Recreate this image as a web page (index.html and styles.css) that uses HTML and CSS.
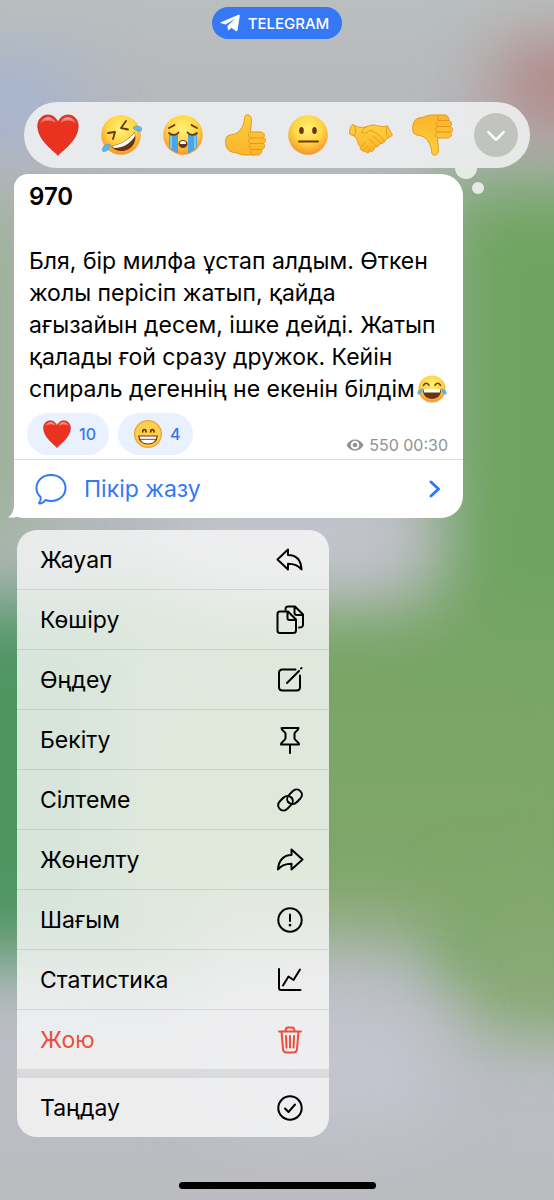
FILE: index.html
```html
<!DOCTYPE html>
<html lang="kk">

<head>
    <meta charset="UTF-8">
    <meta name="viewport" content="width=device-width, initial-scale=1.0">
    <title>Telegram</title>
    <link rel="stylesheet" href="styles.css">
</head>

<body>
    <!-- Shared emoji -->
    <svg class="sprite" aria-hidden="true">
        <defs>
            <radialGradient id="face" cx="50%" cy="35%" r="65%">
                <stop offset="0" stop-color="#fff27a" />
                <stop offset="0.55" stop-color="#ffd644" />
                <stop offset="1" stop-color="#f4942a" />
            </radialGradient>
            <linearGradient id="hand" x1="0" y1="0" x2="0" y2="1">
                <stop offset="0" stop-color="#ffcf3f" />
                <stop offset="1" stop-color="#fbb52a" />
            </linearGradient>
            <linearGradient id="shine" x1="0" y1="0" x2="0" y2="1">
                <stop offset="0" stop-color="#fff" stop-opacity="0.6" />
                <stop offset="1" stop-color="#fff" stop-opacity="0" />
            </linearGradient>
        </defs>
        <symbol id="heart" viewBox="0 0 42 42">
            <path d="M21 41.500C19 38 1 27 .8 12.500C.7 5.500 5 1 11 1C15.500 1 19.500 4 21 8.500C22.500 4 26.500 1 31 1C37 1 41.300 5.500 41.200 12.500C41 27 23 38 21 41.500Z" fill="#e9321f" stroke="#c92a25" stroke-width=".8" />
            <path d="M3 11C4 5 9 2.500 13 3.500C17 4.500 19 8 18 9C15 6 6 5 3 11ZM39 11C38 5 33 2.500 29 3.500C25 4.500 23 8 24 9C27 6 36 5 39 11Z" fill="url(#shine)" />
        </symbol>
        <symbol id="rofl" viewBox="0 0 42 42">
            <circle cx="21" cy="21" r="19.800" fill="url(#face)" />
            <g fill="none" stroke="#6b3410" stroke-width="1.800" stroke-linecap="round" stroke-linejoin="round">
                <path d="M8 19L15 18L13 25M26 7L21 14L28 15.500" />
            </g>
            <path d="M11 32C19 31 29 26 34.500 18C38 28 31 37 22 37C17 37 13 35 11 32Z" fill="#6b3410" />
            <path d="M12 32C20 31 29 26 34.500 18.500L35 22C30 30 23 34 14 34Z" fill="#fff" />
            <path d="M33 14C35 11 41 12 42 14.500C42 18 38 18.500 33 14ZM10 30C10 34 7 38 3 37.500C1 35 4 30 10 30Z" fill="#5db8ec" stroke="#3a92d0" stroke-width=".6" />
        </symbol>
        <symbol id="sob" viewBox="0 0 42 42">
            <circle cx="21" cy="21" r="19.800" fill="url(#face)" />
            <path d="M7 20H16V39C12 38 9 35.500 7 33ZM26 20H35V33C33 35.500 30 38 26 39Z" fill="#4ba6e3" />
            <path d="M9 22V34M33 22V34" stroke="#7fc8f3" stroke-width="2" />
            <g fill="none" stroke="#6b3410" stroke-width="1.800" stroke-linecap="round">
                <path d="M7 19C10 21.500 14 21.500 16.500 18.500M25.500 18.500C28 21.500 32 21.500 35 19M7 14C9 13 11 12 12.500 11M35 14C33 13 31 12 29.500 11" />
            </g>
            <ellipse cx="21" cy="30" rx="4.500" ry="4" fill="#6b3410" />
            <path d="M18 28.500C19 26.500 23 26.500 24 28.500V30H18Z" fill="#fff" />
        </symbol>
        <symbol id="thumb" viewBox="0 0 42 42">
            <path d="M1.500 23C4 20 9 21 12 19C16 16 18.500 12 19.500 6C19.500 2 20.500 .8 22.500 .8C26.500 .8 27 6 26 11L25.500 18H35C39 18 40.500 21 38.500 23.500C41.500 24.500 41 28 38.500 29.500C40.500 31.500 39.500 35 36.500 35.500C37.500 38.500 35.500 41 32 41H20C14 41 13 38.500 7 38C1 37 -.5 28 1.500 23Z" fill="url(#hand)" stroke="#e8951f" stroke-width="1" stroke-linejoin="round" />
            <path d="M25.500 18C22.500 20 22.500 22.500 26 24H38.500M26 24C22.500 25.500 22.500 28 26 29.500H38.500M26 29.500C23 31 23.500 34 27 35.500H36.500M27 35.500C24.500 37 25.500 40 28 41" fill="none" stroke="#e8951f" stroke-width="1" stroke-linecap="round" />
        </symbol>
        <symbol id="neutral" viewBox="0 0 42 42">
            <circle cx="21" cy="21" r="19.800" fill="url(#face)" />
            <ellipse cx="14.500" cy="16.500" rx="2.300" ry="3.500" fill="#6b3410" />
            <ellipse cx="27.500" cy="16.500" rx="2.300" ry="3.500" fill="#6b3410" />
            <path d="M12 27.500H31" stroke="#6b3410" stroke-width="2" stroke-linecap="round" />
        </symbol>
        <symbol id="shake" viewBox="0 0 46 42">
            <path d="M4 10C8 13 14 14 19 12L24 10.500C29 10.500 34 13.500 40 11.500L45.500 21C43 23.500 41 23.500 39 25L37 28C36 30 34 30 32 30C32 33 29 34 27 33C27 36 25 39 22 38C21 40 18 40 17 38C14 38.500 11 36 12 33.500C10 32 9 28 8 25L5.500 22L.8 20C0 16 1.500 12 4 10Z" fill="url(#hand)" stroke="#e8951f" stroke-width="1" stroke-linejoin="round" />
            <path d="M19 12C15 14 12 16.500 14 19C17 20 20 18 22 16C28 18 34 22 37 28M25 22L33 29M21 25L28 32M13 33L17 29M16 36L20 32M20 38L23 34M40 11.500C38 16 39 20 41 24M4 10C8 13 8 19 5.500 22" fill="none" stroke="#e8951f" stroke-width="1" stroke-linecap="round" />
        </symbol>
        <symbol id="joy" viewBox="0 0 42 42">
            <circle cx="21" cy="21" r="19" fill="url(#face)" />
            <path d="M9 16C11 12 15 12 17 16M25 16C27 12 31 12 33 16" fill="none" stroke="#6b3410" stroke-width="2" stroke-linecap="round" />
            <path d="M8 21H34C34 30 28 35 21 35C14 35 8 30 8 21Z" fill="#6b3410" />
            <path d="M9 21H33L32 26H10Z" fill="#fff" />
            <path d="M8 20C8 26 4 31 1 28C-1 25 3 22 8 20ZM34 20C34 26 38 31 41 28C43 25 39 22 34 20Z" fill="#58b4ec" />
        </symbol>
        <symbol id="grin" viewBox="0 0 42 42">
            <circle cx="21" cy="21" r="20" fill="#fdd04c" stroke="#efa338" stroke-width="2" />
            <path d="M13 18C13 13 18 13 18 18M25 18C25 13 30 13 30 18" fill="none" stroke="#6b3410" stroke-width="2.500" stroke-linecap="round" />
            <path d="M7 24H35C34 32 29 36 21 36C13 36 8 32 7 24Z" fill="#fff" stroke="#6b3410" stroke-width="1.800" stroke-linejoin="round" />
            <path d="M8 29H34" stroke="#6b3410" stroke-width="1.300" />
        </symbol>
    </svg>

    <div class="wallpaper" aria-hidden="true">
        <span class="blob blob-blue"></span>
        <span class="blob blob-sage"></span>
        <span class="blob blob-green"></span>
        <span class="blob blob-emerald"></span>
        <span class="blob blob-field"></span>
        <span class="blob blob-red"></span>
        <span class="blob blob-haze"></span>
        <span class="blob blob-olive"></span>
        <span class="blob blob-fog"></span>
    </div>

    <a class="app-pill" href="#">
        <svg width="20" height="18" viewBox="0 0 20 18"><path d="M.8 8.300L18.500.8C19.300.5 20 1 19.800 1.900L17.500 16.200C17.300 17.200 16.500 17.500 15.700 16.900L11.500 13.800L9 15.900C8.500 16.300 8 16.200 7.900 15.500L7.300 12L15.500 4.500L5.800 10.500L1 9.300C.3 9.100.2 8.600.8 8.300Z" fill="#fff" /></svg>
        TELEGRAM
    </a>

    <div class="reactions">
        <button type="button" aria-label="Жүрек"><svg><use href="#heart" /></svg></button>
        <button type="button" aria-label="Күлкі"><svg><use href="#rofl" /></svg></button>
        <button type="button" aria-label="Жылау"><svg><use href="#sob" /></svg></button>
        <button type="button" aria-label="Ұнайды"><svg><use href="#thumb" /></svg></button>
        <button type="button" aria-label="Бейтарап"><svg><use href="#neutral" /></svg></button>
        <button type="button" aria-label="Қол алысу"><svg class="wide"><use href="#shake" /></svg></button>
        <button type="button" aria-label="Ұнамайды"><svg class="flipped"><use href="#thumb" /></svg></button>
        <button type="button" class="more" aria-label="Тағы">
            <svg viewBox="0 0 44 44"><path d="M14 19L22 27L30 19" fill="none" stroke="#fff" stroke-width="2.600" stroke-linecap="round" stroke-linejoin="round" /></svg>
        </button>
    </div>

    <article class="message">
        <svg class="tail" width="24" height="20" viewBox="0 0 24 20"><path d="M6 0V7C6 12 4 17 0 19.500C5 20 12 19 16 16C18 18 21 20 24 20V0Z" fill="#fff" /></svg>
        <div class="message-body">
            <h1>970</h1>
            <p>Бля, бір милфа ұстап алдым. Өткен<br>жолы перісіп жатып, қайда<br>ағызайын десем, ішке дейді. Жатып<br>қалады ғой сразу дружок. Кейін<br>спираль дегеннің не екенін білдім<svg class="inline-emoji"><use href="#joy" /></svg></p>
            <div class="message-footer">
                <button type="button" class="chip"><svg><use href="#heart" /></svg>10</button>
                <button type="button" class="chip"><svg><use href="#grin" /></svg>4</button>
                <span class="meta">
                    <svg width="18" height="14" viewBox="0 0 18 14"><path d="M.5 7C4-.5 14-.5 17.500 7C14 14.500 4 14.500.5 7Z" fill="#929296" /><circle cx="9" cy="7" r="4.300" fill="#fff" /><circle cx="9" cy="7" r="2.300" fill="#929296" /></svg>
                    550 00:30
                </span>
            </div>
        </div>
        <button type="button" class="comment">
            <svg width="32" height="32" viewBox="0 0 32 32" fill="none" stroke="currentColor" stroke-width="2" stroke-linejoin="round"><path d="M16 2C24.500 2 30.500 7.500 30.500 15S24.500 28 16 28C14 28 12 27.700 10.500 27C9 29 6.500 30.500 4.500 30.500C4 30.300 4 30 4.300 29.500C5.500 28 6 26 5.600 24C3 21.800 1.500 18.500 1.500 15C1.500 7.500 7.500 2 16 2Z" /></svg>
            <span>Пікір жазу</span>
            <svg class="chevron" width="12" height="18" viewBox="0 0 12 18" fill="none" stroke="currentColor" stroke-width="3" stroke-linecap="round" stroke-linejoin="round"><path d="M2 2L9.500 9L2 16" /></svg>
        </button>
    </article>

    <nav class="menu">
        <div class="menu-group">
            <button type="button">Жауап <svg viewBox="0 0 30 30"><path d="M2.500 14.500L13 4.500V10C21 10 26 15 26.500 24.500C23 20 19 18.700 13 18.700V24.500Z" /></svg></button>
            <button type="button">Көшіру <svg viewBox="0 0 30 30"><path d="M13 6.500H5C3.300 6.500 2.500 7.500 2.500 9V25.500C2.500 27.500 3.300 28 5 28H18C20 28 21 27.500 21 25.500V14.500ZM12.500 7V13C12.500 14.500 13.200 15 14.500 15H21M10.500 4.500C10.500 2.500 11.200 1.500 13 1.500H20L28 9.500V19.500C28 21.500 27.500 22.500 24 22.500M19.500 2V8C19.500 9.500 20.500 10 22 10H27.500" /></svg></button>
            <button type="button">Өңдеу <svg viewBox="0 0 30 30"><path d="M20.500 4.500H7.500C5 4.500 4 5.500 4 8V22C4 24.500 5 25.500 7.500 25.500H21.500C24 25.500 25 24.500 25 22V10.500M12 18L24 6M26 3.500L26.500 3" /></svg></button>
            <button type="button">Бекіту <svg viewBox="0 0 30 30"><path d="M6.500 3H23.500C23.500 5.500 20 6.500 19.500 8.500V13.500C20 15.500 24 17 24 19.500H6C6 17 10 15.500 10.500 13.500V8.500C10 6.500 6.500 5.500 6.500 3ZM15 19.500V28" /></svg></button>
            <button type="button">Сілтеме <svg viewBox="0 0 30 30"><g transform="rotate(-45 15 15)"><path d="M11.500 9.700H7C3.800 9.700 1.400 12 1.400 15S3.800 20.300 7 20.300H12C15.500 20.300 17.700 18 17.700 15.500" transform="translate(0 -1)" /><path d="M18.500 20.300H23C26.200 20.300 28.600 18 28.600 15S26.200 9.700 23 9.700H18C14.500 9.700 12.300 12 12.300 14.500" transform="translate(0 1)" /><path d="M11.500 8.700C15 8.700 17.700 11 17.700 14.500M18.500 21.300C15 21.300 12.300 19 12.300 15.500" /></g></svg></button>
            <button type="button">Жөнелту <svg viewBox="0 0 30 30"><path d="M27.500 14.500L16.500 4.500V10C9 10 3.500 15 3 24.500C6.500 20 10.500 18.700 16.500 18.700V24.500Z" /></svg></button>
            <button type="button">Шағым <svg viewBox="0 0 30 30"><circle cx="15" cy="15" r="11.700" /><path d="M15 9.500V16" /><path d="M15 20V20.300" stroke-width="2.600" /></svg></button>
            <button type="button">Статистика <svg viewBox="0 0 30 30"><path d="M4 4V23C4 24.500 4.500 25 6 25H25.500M8 20.500L13.500 11.500L18.500 15L25 4.500" /></svg></button>
            <button type="button" class="danger">Жою <svg viewBox="0 0 30 30"><path d="M4 6.500H26M6.500 6.500L8 24C8.200 26.500 9.300 27.500 11.500 27.500H18.500C20.700 27.500 21.800 26.500 22 24L23.500 6.500M10.500 6C10.500 3.500 11 2.500 13 2.500H17C19 2.500 19.500 3.500 19.500 6M11 11L11.500 22.500M15 11V22.500M19 11L18.500 22.500" /></svg></button>
        </div>
        <div class="menu-group">
            <button type="button">Таңдау <svg viewBox="0 0 30 30"><circle cx="15" cy="15" r="11.700" /><path d="M10 15.500L13.500 19L20 11.500" /></svg></button>
        </div>
    </nav>

    <div class="home-indicator"></div>
</body>

</html>
```
FILE: styles.css
```css
* {
    box-sizing: border-box;
    margin: 0;
    padding: 0;
}

body {
    font-family: Inter, 'Liberation Sans', sans-serif;
    font-size: 23px;
    color: #000;
    background-color: #babcc2;
    min-height: 100vh;
    display: flex;
    flex-direction: column;
    align-items: flex-start;
    padding: 7px 0 11px;
    position: relative;
    overflow-x: hidden;
}

button {
    font: inherit;
    color: inherit;
    background: none;
    border: none;
    cursor: pointer;
}

svg {
    display: block;
    flex-shrink: 0;
}

.sprite {
    position: absolute;
    width: 0;
    height: 0;
}

/* Blurred chat behind the menu */
.wallpaper {
    position: absolute;
    inset: 0;
    overflow: hidden;
    z-index: -1;
    background: linear-gradient(#b9bfbf, #b6b7bb 10%, #bcbec6 90%, #bbbcbf);
}

.blob {
    position: absolute;
    filter: blur(36px);
}

.blob-blue {
    left: -20%;
    top: 5%;
    width: 34%;
    height: 7%;
    background: #a5b4d2;
}

.blob-sage {
    left: -15%;
    top: 17%;
    width: 23%;
    height: 28%;
    background: #9cb198;
}

.blob-green {
    left: 79%;
    top: 15%;
    width: 40%;
    height: 67%;
    background: #6ea460;
}

.blob-field {
    left: 20%;
    top: 50%;
    width: 90%;
    height: 28%;
    background: linear-gradient(#75a564, #83a76c);
}

.blob-emerald {
    left: -25%;
    top: 50%;
    width: 60%;
    height: 30%;
    background: #4f9562;
}

.blob-red {
    left: 90%;
    top: 4%;
    width: 25%;
    height: 6%;
    background: #b07a77;
}

.blob-haze {
    left: 30%;
    top: 42%;
    width: 45%;
    height: 6%;
    background: #c6c7d0;
}

.blob-olive {
    left: 85%;
    top: 75%;
    width: 35%;
    height: 11%;
    background: #88a973;
}

.blob-fog {
    left: 40%;
    top: 84%;
    width: 38%;
    height: 10%;
    background: #c4c5cd;
}

.app-pill {
    align-self: center;
    display: flex;
    align-items: center;
    gap: 8px;
    height: 32px;
    padding: 0 13px 0 8px;
    border-radius: 16px;
    background: #3578f6;
    color: #fff;
    font-size: 15px;
    font-weight: 500;
    text-decoration: none;
}

.reactions {
    align-self: stretch;
    display: flex;
    justify-content: space-between;
    align-items: center;
    height: 66px;
    margin: 63px 24px 0;
    padding: 0 12px;
    border-radius: 33px;
    background: rgba(240, 241, 242, 0.88);
    position: relative;
    z-index: 1;
}

.reactions::before,
.reactions::after {
    content: '';
    position: absolute;
    background: #e6eae5;
}

.reactions::before {
    right: 53px;
    top: 100%;
    width: 22px;
    height: 11px;
    border-radius: 0 0 11px 11px;
}

.reactions::after {
    right: 46px;
    top: 80px;
    width: 12px;
    height: 12px;
    border-radius: 50%;
}

.reactions button {
    width: 44px;
    height: 44px;
    display: flex;
    align-items: center;
    justify-content: center;
}

.reactions svg {
    width: 42px;
    height: 42px;
}

.reactions .wide {
    width: 44px;
}

.reactions .flipped {
    transform: scaleY(-1);
}

.reactions .more {
    border-radius: 50%;
    background: #c1c3bf;
}

.message {
    align-self: stretch;
    margin: 6px 91px 0 14px;
    border-radius: 14px 22px 22px 8px;
    background: #fff;
    position: relative;
}

.tail {
    position: absolute;
    left: -6px;
    bottom: 0;
}

.message-body {
    padding: 7px 15px 4px;
    border-bottom: 1px solid #d9dadc;
}

.message h1 {
    font-size: 24px;
    font-weight: 600;
    line-height: 32px;
    margin-bottom: 32px;
}

.message p {
    line-height: 32px;
    white-space: nowrap;
}

.inline-emoji {
    display: inline-block;
    width: 30px;
    height: 30px;
    margin-left: 2px;
    vertical-align: -7px;
}

.message-footer {
    display: flex;
    gap: 9px;
    margin: 8px 0 0 -2px;
}

.chip {
    display: flex;
    align-items: center;
    gap: 8px;
    height: 42px;
    padding: 0 13px 0 16px;
    border-radius: 21px;
    background: #e8f1fd;
    color: #3a78e6;
    font-size: 16px;
    font-weight: 500;
}

.chip svg {
    width: 28px;
    height: 28px;
}

.meta {
    display: flex;
    align-items: center;
    gap: 5px;
    align-self: flex-end;
    margin-left: auto;
    color: #929296;
    font-size: 16px;
    line-height: 20px;
}

.comment {
    display: flex;
    align-items: center;
    gap: 17px;
    width: 100%;
    height: 58px;
    padding: 0 22px 0 21px;
    color: #3478f6;
}

.chevron {
    margin-left: auto;
}

.menu {
    width: 312px;
    margin: 12px 0 0 17px;
    border-radius: 20px;
    overflow: hidden;
    background: rgba(255, 255, 255, 0.1);
}

.menu-group {
    background: rgba(248, 248, 249, 0.78);
}

.menu-group + .menu-group {
    border-top: 9px solid rgba(160, 162, 165, 0.25);
}

.menu button {
    display: flex;
    align-items: center;
    justify-content: space-between;
    width: 100%;
    height: 59px;
    padding: 0 24px 0 23px;
}

.menu button + button {
    height: 60px;
    border-top: 1px solid rgba(60, 70, 60, 0.13);
}

.menu svg {
    width: 30px;
    height: 30px;
    fill: none;
    stroke: currentColor;
    stroke-width: 2;
    stroke-linecap: round;
    stroke-linejoin: round;
}

.menu .danger {
    color: #eb4e3d;
}

.home-indicator {
    align-self: center;
    width: 197px;
    height: 7px;
    margin-top: auto;
    border-radius: 4px;
    background: #000;
}
```
